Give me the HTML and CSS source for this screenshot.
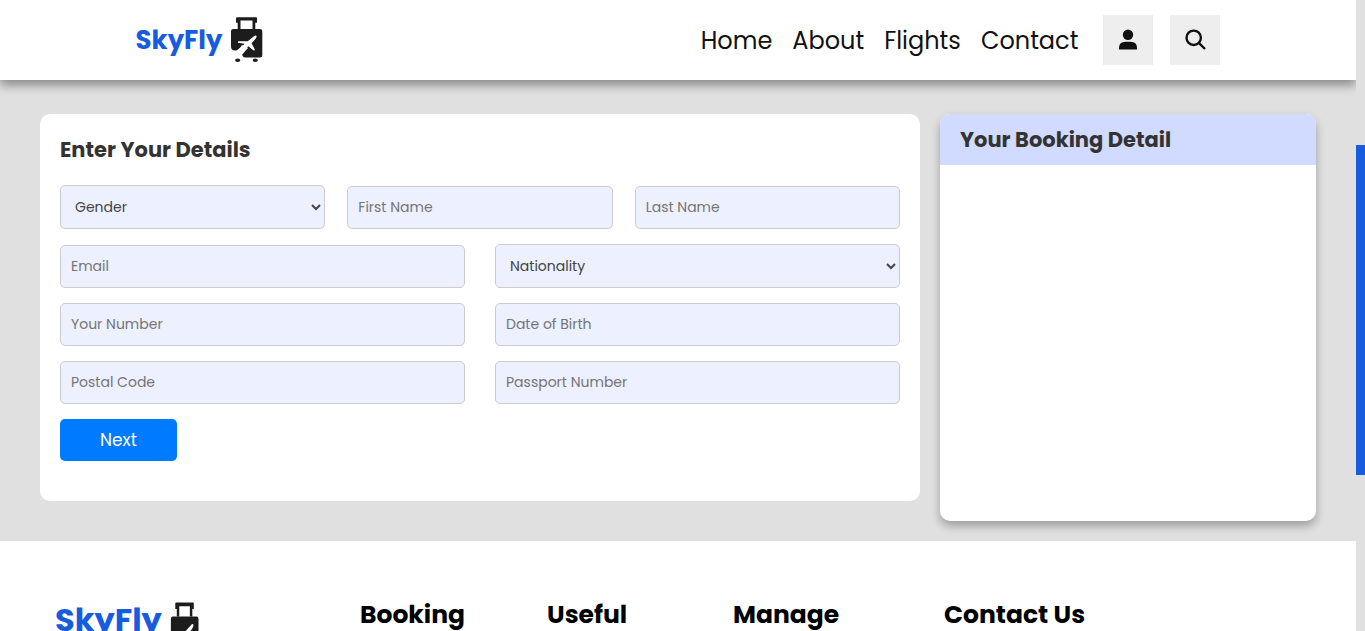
FILE: index.html
```html
<!DOCTYPE html>
<html lang="en">
<head>
<meta charset="utf-8">
<meta name="viewport" content="width=device-width, initial-scale=1">
<title>SkyFly</title>
<link rel="stylesheet" href="styles.css">
</head>
<body>
<svg class="sprite" aria-hidden="true">
  <symbol id="suitcase" viewBox="0 0 34 48" preserveAspectRatio="none">
    <path fill="#1c1c1c" d="M6 2.200Q6 1.200 7 1.200H26Q27 1.200 27 2.200V6.800H22.500V4.500H10.500V6.800H6ZM7.700 6.500H10.500V13H7.700ZM22.500 6.500H25.300V13H22.500Z"/>
    <path fill="#1c1c1c" d="M3.300 13H30Q32.300 13 32.300 15.300V39Q32.300 41.500 30 41.500H15.500Q12.500 41.500 12.200 38.500L18 32 12 29 8.500 34.500H5Q1 34.500 1 30.500V15.300Q1 13 3.300 13Z"/>
    <path fill="#fff" d="M8 25.200 17.800 25.300 23.600 20.400Q25.600 19 26.400 19.700 27 20.700 25.600 22.700L21.600 27.200 24.800 33.500 24.300 34.700 23.300 34.300 18.300 30.200 12.300 37 8 39 5.500 35.500 13.500 29 14.600 27.700 8 26.800Z"/>
    <ellipse cx="7.700" cy="44.200" rx="2.600" ry="1.800" fill="#1c1c1c"/>
    <ellipse cx="25.300" cy="44.200" rx="2.600" ry="1.800" fill="#1c1c1c"/>
  </symbol>
</svg>
<div class="viewport">
  <header class="header">
    <a class="logo" href="#"><span>SkyFly</span><svg class="logo-icon" aria-hidden="true"><use href="#suitcase"/></svg></a>
    <div class="header-end">
      <nav class="nav" aria-label="Main">
        <a href="#">Home</a>
        <a href="#">About</a>
        <a href="#">Flights</a>
        <a href="#">Contact</a>
      </nav>
      <div class="actions">
        <button class="icon-button" type="button" aria-label="Account">
          <svg viewBox="0 0 24 24" aria-hidden="true"><circle cx="12" cy="6.700" r="5.200"/><path d="M3 21.600V20Q3 13.800 9.500 13.800H14.500Q21 13.800 21 20V21.600Z"/></svg>
        </button>
        <button class="icon-button" type="button" aria-label="Search">
          <svg viewBox="0 0 24 24" aria-hidden="true"><circle class="lens" cx="10.700" cy="9.800" r="7.200"/><path class="lens" d="M15.800 14.800 22 21"/></svg>
        </button>
      </div>
    </div>
  </header>

  <main class="content">
    <form class="details">
      <h2 class="title">Enter Your Details</h2>
      <div class="fields">
        <div class="row row-three">
          <select class="field" aria-label="Gender"><option>Gender</option><option>Male</option><option>Female</option></select>
          <input class="field" type="text" placeholder="First Name" aria-label="First Name">
          <input class="field" type="text" placeholder="Last Name" aria-label="Last Name">
        </div>
        <div class="row">
          <input class="field" type="email" placeholder="Email" aria-label="Email">
          <select class="field" aria-label="Nationality"><option>Nationality</option></select>
        </div>
        <div class="row">
          <input class="field" type="tel" placeholder="Your Number" aria-label="Your Number">
          <input class="field" type="text" placeholder="Date of Birth" aria-label="Date of Birth">
        </div>
        <div class="row">
          <input class="field" type="text" placeholder="Postal Code" aria-label="Postal Code">
          <input class="field" type="text" placeholder="Passport Number" aria-label="Passport Number">
        </div>
        <button class="next" type="button">Next</button>
      </div>
    </form>
    <aside class="booking">
      <h2 class="title booking-title">Your Booking Detail</h2>
    </aside>
  </main>

  <footer class="footer">
    <a class="logo logo-footer" href="#"><span>SkyFly</span><svg class="logo-icon" aria-hidden="true"><use href="#suitcase"/></svg></a>
    <h3>Booking</h3>
    <h3>Useful</h3>
    <h3>Manage</h3>
    <h3>Contact Us</h3>
  </footer>
</div>
<div class="scrollbar" aria-hidden="true"><div class="thumb"></div></div>
</body>
</html>
```
FILE: styles.css
```css
* {
  box-sizing: border-box;
  margin: 0;
}

body {
  display: grid;
  grid-template-columns: minmax(0, 1fr) 9px;
  height: 100vh;
  background: #e0e0e0;
  font-family: Poppins, Inter, "Open Sans", sans-serif;
  overflow: hidden;
}

a {
  color: inherit;
  text-decoration: none;
}

.sprite {
  display: none;
}

.viewport {
  min-height: 0;
  overflow-y: auto;
  scrollbar-width: none;
}

/* Page scroll indicator */
.scrollbar {
  display: grid;
  grid-template-rows: 145fr 330fr 156fr;
  background: #e0e0e0;
}

.thumb {
  grid-row: 2;
  background: #175cdf;
}

/* Header */
.header {
  display: flex;
  align-items: center;
  justify-content: space-between;
  height: 80px;
  padding: 0 10%;
  background: #fff;
  box-shadow: 0 5px 10px rgba(0, 0, 0, 0.4);
}

.logo {
  display: flex;
  align-items: center;
  gap: 8px;
  color: #175cdf;
  font-size: 26px;
  font-weight: 700;
  line-height: 40px;
}

.logo-icon {
  width: 34px;
  height: 48px;
}

.header-end {
  display: flex;
  align-items: center;
  gap: 25px;
}

.nav {
  display: flex;
  gap: 20px;
  color: #111;
  font-size: 24px;
}

.actions {
  display: flex;
  gap: 17px;
}

.icon-button {
  display: grid;
  place-items: center;
  width: 50px;
  height: 50px;
  padding: 0;
  border: 0;
  background: #eee;
}

.icon-button svg {
  width: 24px;
  height: 24px;
  fill: #111;
}

.icon-button .lens {
  fill: none;
  stroke: #111;
  stroke-width: 2.4;
}

/* Booking form and summary */
.content {
  display: grid;
  grid-template-columns: minmax(0, 1fr) 376px;
  gap: 20px;
  align-items: start;
  padding: 34px 40px 20px;
}

.details {
  padding: 20px 20px 40px;
  border-radius: 10px;
  background: #fff;
}

.title {
  color: #333;
  font-size: 21px;
  font-weight: 700;
  line-height: 31px;
}

.fields {
  display: grid;
  gap: 15px;
  margin-top: 20px;
}

.row {
  display: grid;
  grid-template-columns: repeat(2, minmax(0, 1fr));
  gap: 30px;
  align-items: end;
}

.row-three {
  grid-template-columns: repeat(3, minmax(0, 1fr));
  gap: 22px;
}

.field {
  width: 100%;
  height: 43px;
  padding: 10px;
  border: 1px solid #ccc;
  border-radius: 5px;
  background: #ecf0ff;
  color: #444;
  font-family: inherit;
  font-size: 14px;
}

select.field {
  height: 44px;
  padding-right: 0;
}

.field::placeholder {
  color: #757575;
}

.next {
  justify-self: start;
  height: 42px;
  padding: 0 40px;
  border: 0;
  border-radius: 5px;
  background: #007bff;
  color: #fff;
  font-family: inherit;
  font-size: 17px;
  font-weight: 400;
}

.booking {
  min-height: 407px;
  border-radius: 10px;
  background: #fff;
  box-shadow: 0 5px 10px rgba(0, 0, 0, 0.3);
}

.booking-title {
  padding: 10px 20px;
  border-radius: 10px 10px 0 0;
  background: #d1daff;
}

/* Footer */
.footer {
  position: relative;
  display: grid;
  grid-template-columns: 305fr 187fr 186fr 211fr 357fr;
  align-items: start;
  min-height: 320px;
  padding: 55px;
  background: #fff;
}

.footer h3 {
  color: #000;
  font-size: 25px;
  font-weight: 700;
  line-height: 38px;
}

.logo-footer {
  align-items: flex-start;
  font-size: 32px;
  line-height: 48px;
}

.logo-footer .logo-icon {
  width: 30px;
  height: 57px;
  margin-top: 5px;
}
```
